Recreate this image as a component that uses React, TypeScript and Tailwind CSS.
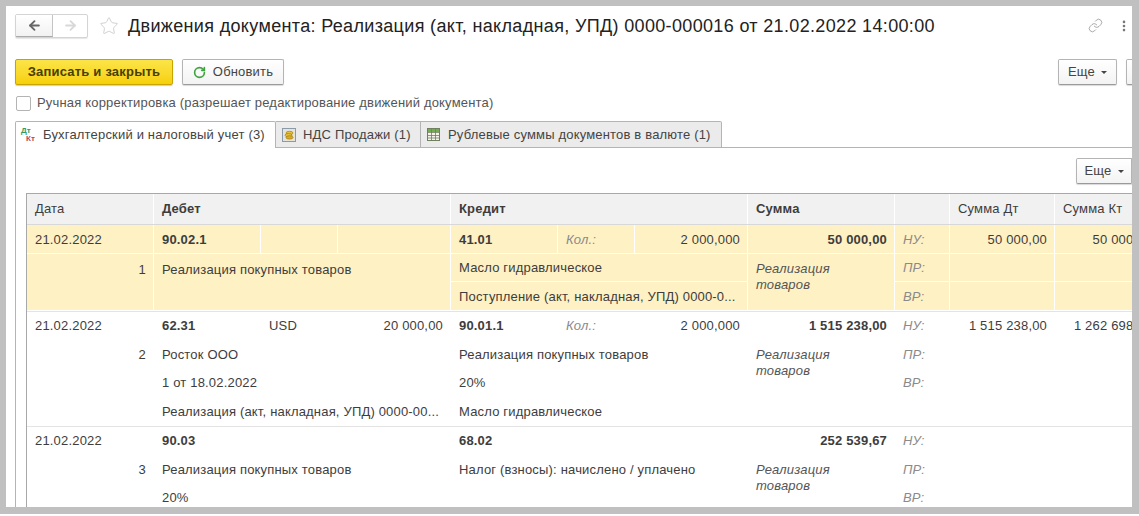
import React from 'react';
import { ArrowLeft, ArrowRight, Star, RotateCw, Link, EllipsisVertical } from 'lucide-react';

const rowGrid = 'grid grid-cols-[127px_107px_77px_113px_107px_77px_113px_147px_55px_105px_105px] w-[1133px]';

const Caret = () => <span className="ml-[6px] inline-block border-x-[3px] border-t-[3px] border-x-transparent border-t-[#444] align-middle" />;

const Btn = ({ children, className }: { children: React.ReactNode; className: string }) => (
  <button className={`flex h-[26px] shrink-0 items-center justify-center rounded-[2px] border border-[#b4b4b4] border-b-[#9a9a9a] bg-gradient-to-b from-white to-[#f3f3f3] text-[#444] shadow-[0_1px_1px_rgba(0,0,0,0.15)] ${className}`}>
    {children}
  </button>
);

const CoinIcon = () => (
  <svg width="14" height="14" viewBox="0 0 14 14" className="shrink-0">
    <rect x="0.5" y="0.5" width="13" height="13" fill="#e4e4dc" stroke="#8a9aa8" />
    <ellipse cx="7.5" cy="5" rx="3.5" ry="1.7" fill="#e8c23a" stroke="#a07f16" strokeWidth="0.7" />
    <ellipse cx="6.5" cy="7.2" rx="3.5" ry="1.7" fill="#e8c23a" stroke="#a07f16" strokeWidth="0.7" />
    <ellipse cx="7.5" cy="9.4" rx="3.5" ry="1.7" fill="#d9ab25" stroke="#a07f16" strokeWidth="0.7" />
  </svg>
);

const GridIcon = () => (
  <svg width="13" height="13" viewBox="0 0 13 13" className="shrink-0">
    <rect x="0.5" y="0.5" width="12" height="12" fill="#f4f4e8" stroke="#6f7f5f" />
    <rect x="1" y="1" width="11" height="3" fill="#6fb04a" />
    <path d="M0.5 4.5H12.5M0.5 7.5H12.5M0.5 10H12.5M4.5 0.5V12.5M8.5 0.5V12.5" stroke="#6f7f5f" strokeWidth="0.8" fill="none" />
  </svg>
);

type CellProps = { children?: React.ReactNode; className?: string; line?: boolean };

// text cell of a register row, line = white dividers of the selected row
const Cell = ({ children, className = '', line }: CellProps) => (
  <div className={`flex items-center overflow-hidden whitespace-nowrap px-2 text-[#3d3d3d] ${line ? 'border-r border-b border-white pt-px' : ''} ${className}`}>
    {children}
  </div>
);

const Note = ({ line }: { line?: boolean }) => (
  <Cell line={line} className="row-span-2 !items-start !whitespace-normal !pt-[7px] italic leading-[16px] text-[#555]">Реализация<br />товаров</Cell>
);

const Tag = ({ children, line }: CellProps) => <Cell line={line} className="italic text-[#8a8a8a]">{children}</Cell>;
const Num = ({ children, line, className = '' }: CellProps) => <Cell line={line} className={`justify-end ${line ? '!pr-[7px]' : ''} ${className}`}>{children}</Cell>;
const Bold = ({ children, line, className = '' }: CellProps) => <Cell line={line} className={`font-bold ${className}`}>{children}</Cell>;

const App = () => {
  return (
    <div className="flex h-[516px] w-[1139px] flex-col overflow-hidden bg-[#c0c0c0] pt-[6px] font-['Liberation_Sans',sans-serif] text-[13px] tracking-[0.18px]">
      <div className="ml-[6px] mr-[7px] flex h-[501px] shrink-0 flex-col overflow-hidden bg-white pl-[9px]">
        {/* title bar */}
        <div className="mt-[7px] flex h-[25px] shrink-0 items-center">
          <div className="flex h-[24px] w-[73px] shrink-0 rounded-[2px] border border-[#d4d4d4] shadow-[0_1px_1px_rgba(0,0,0,0.1)]">
            <div className="flex w-[37px] items-center justify-center border-r border-b border-r-[#c4c4c4] border-b-[#aaa] bg-gradient-to-b from-white to-[#f2f2f2]">
              <ArrowLeft size={15} strokeWidth={3} className="text-[#666]" />
            </div>
            <div className="flex flex-1 items-center justify-center">
              <ArrowRight size={15} strokeWidth={3} className="text-[#d8d8d8]" />
            </div>
          </div>
          <Star size={20} strokeWidth={1} className="ml-[11px] shrink-0 text-[#c8c8c8]" />
          <h1 className="ml-[9px] whitespace-nowrap text-[18px] leading-[24px] font-normal tracking-[0.34px] text-[#222]">Движения документа: Реализация (акт, накладная, УПД) 0000-000016 от 21.02.2022 14:00:00</h1>
          <Link size={15} strokeWidth={1} className="ml-[153px] shrink-0 text-[#777]" />
          <EllipsisVertical size={14} strokeWidth={2.5} className="ml-[14px] shrink-0 text-[#777]" />
        </div>

        {/* command bar */}
        <div className="mt-[21px] flex shrink-0 items-center">
          <button className="flex h-[26px] w-[158px] shrink-0 items-center justify-center rounded-[2px] border border-[#c9a400] bg-gradient-to-b from-[#fbe545] to-[#f7d000] font-bold tracking-[0.2px] text-[#4a4000] shadow-[0_1px_1px_rgba(0,0,0,0.2)]">Записать и закрыть</button>
          <Btn className="ml-[9px] w-[102px] gap-[7px]">
            <RotateCw size={13} strokeWidth={3} className="text-[#3fa33f]" />
            Обновить
          </Btn>
          <Btn className="ml-[774px] w-[59px]">Еще<Caret /></Btn>
          <Btn className="ml-[9px] w-[40px]">{' '}</Btn>
        </div>

        <label className="mt-[10px] flex h-[16px] shrink-0 items-center pl-px text-[#555]">
          <span className="h-[15px] w-[15px] rounded-[2px] border border-[#b4b4b4] bg-white" />
          <span className="ml-[6px]">Ручная корректировка (разрешает редактирование движений документа)</span>
        </label>

        {/* tabs */}
        <div className="mt-[10px] flex h-[28px] shrink-0">
          <div className="z-10 flex h-[27px] w-[261px] shrink-0 items-center rounded-t-[2px] border border-b-0 border-[#b4b4b4] bg-white pl-[5px] text-[#444]">
            <span className="relative h-[17px] w-[17px] shrink-0 text-[8px] leading-[8px] font-bold tracking-normal">
              <span className="absolute top-0 left-0 text-[#2f9a63]">Дт</span>
              <span className="absolute top-[8px] left-[5px] text-[#b34a55]">Кт</span>
            </span>
            <span className="ml-[5px]">Бухгалтерский и налоговый учет (3)</span>
          </div>
          <div className="flex h-[27px] w-[145px] shrink-0 items-center gap-[7px] border border-l-0 border-[#b4b4b4] bg-[#ebebeb] pl-[6px] text-[#444]">
            <CoinIcon />НДС Продажи (1)
          </div>
          <div className="flex h-[27px] w-[301px] shrink-0 items-center gap-[8px] rounded-tr-[2px] border border-l-0 border-[#b4b4b4] bg-[#ebebeb] pl-[6px] text-[#444]">
            <GridIcon />Рублевые суммы документов в валюте (1)
          </div>
          <div className="h-[27px] flex-1 border-b border-[#b4b4b4]" />
        </div>

        {/* tab page */}
        <div className="-mt-px flex min-h-0 flex-1 flex-col overflow-hidden border-l border-[#b4b4b4] pl-[10px]">
          <div className="mt-[10px] flex shrink-0 justify-end">
            <Btn className="w-[56px] rounded-r-none">Еще<Caret /></Btn>
          </div>

          {/* register table */}
          <div className="mt-[9px] w-[1106px] overflow-hidden border-t border-l border-[#a8a8a8]">
            <div className={`${rowGrid} h-[31px] border-b border-[#d8d8d8] bg-[#f1f1f1] text-[#444]`}>
              <Cell className="border-r border-white">Дата</Cell>
              <Cell className="col-span-3 border-r border-white font-bold">Дебет</Cell>
              <Cell className="col-span-3 border-r border-white font-bold">Кредит</Cell>
              <Cell className="border-r border-white font-bold">Сумма</Cell>
              <Cell className="border-r border-white" />
              <Cell className="border-r border-white">Сумма Дт</Cell>
              <Cell>Сумма Кт</Cell>
            </div>

            <div className={`${rowGrid} auto-rows-[28.5px] border-b border-[#e4e4e4] bg-[#fef1c4]`}>
              <Cell line>21.02.2022</Cell>
              <Bold line>90.02.1</Bold>
              <Cell line />
              <Cell line />
              <Bold line>41.01</Bold>
              <Tag line>Кол.:</Tag>
              <Num line>2 000,000</Num>
              <Num line className="font-bold">50 000,00</Num>
              <Tag line>НУ:</Tag>
              <Num line>50 000,00</Num>
              <Num line>50 000,00</Num>

              <Num line className="row-span-2 !items-start !pt-[6px]">1</Num>
              <Cell line className="col-span-3 row-span-2 !items-start !pt-[6px]">Реализация покупных товаров</Cell>
              <Cell line className="col-span-3">Масло гидравлическое</Cell>
              <Note line />
              <Tag line>ПР:</Tag>
              <Cell line />
              <Cell line />

              <Cell line className="col-span-3">Поступление (акт, накладная, УПД) 0000-0...</Cell>
              <Tag line>ВР:</Tag>
              <Cell line />
              <Cell line />
            </div>

            <div className={`${rowGrid} auto-rows-[28.5px] border-b border-[#e4e4e4]`}>
              <Cell>21.02.2022</Cell>
              <Bold>62.31</Bold>
              <Cell>USD</Cell>
              <Num>20 000,00</Num>
              <Bold>90.01.1</Bold>
              <Tag>Кол.:</Tag>
              <Num>2 000,000</Num>
              <Num className="font-bold">1 515 238,00</Num>
              <Tag>НУ:</Tag>
              <Num>1 515 238,00</Num>
              <Num>1 262 698,33</Num>

              <Num>2</Num>
              <Cell className="col-span-3">Росток ООО</Cell>
              <Cell className="col-span-3">Реализация покупных товаров</Cell>
              <Note />
              <Tag>ПР:</Tag>
              <Cell />
              <Cell />

              <Cell />
              <Cell className="col-span-3">1 от 18.02.2022</Cell>
              <Cell className="col-span-3">20%</Cell>
              <Tag>ВР:</Tag>
              <Cell />
              <Cell />

              <Cell />
              <Cell className="col-span-3">Реализация (акт, накладная, УПД) 0000-00...</Cell>
              <Cell className="col-span-3">Масло гидравлическое</Cell>
            </div>

            <div className={`${rowGrid} auto-rows-[28.5px]`}>
              <Cell>21.02.2022</Cell>
              <Bold className="col-span-3">90.03</Bold>
              <Bold className="col-span-3">68.02</Bold>
              <Num className="font-bold">252 539,67</Num>
              <Tag>НУ:</Tag>
              <Cell />
              <Cell />

              <Num>3</Num>
              <Cell className="col-span-3">Реализация покупных товаров</Cell>
              <Cell className="col-span-3">Налог (взносы): начислено / уплачено</Cell>
              <Note />
              <Tag>ПР:</Tag>
              <Cell />
              <Cell />

              <Cell />
              <Cell className="col-span-3">20%</Cell>
              <Cell className="col-span-3" />
              <Tag>ВР:</Tag>
            </div>
          </div>
        </div>
      </div>
      {/* sliver of the window below the frame */}
      <div className="mt-[7px] h-[2px] shrink-0 bg-white" />
    </div>
  );
};

export default App;
